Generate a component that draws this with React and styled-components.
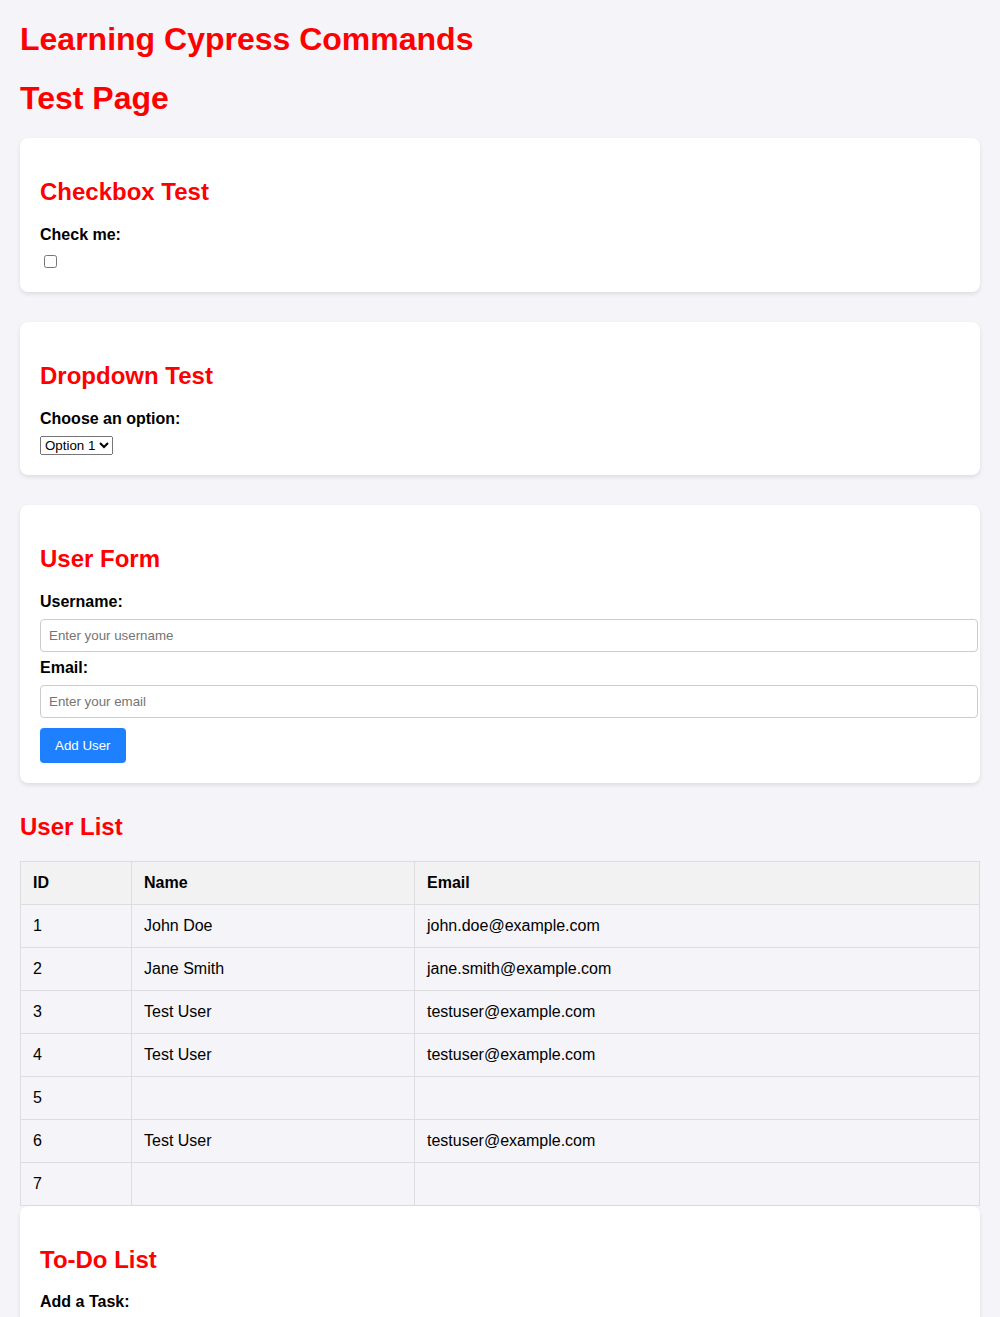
import React from "react";
import styled, { createGlobalStyle } from "styled-components";

const Global = createGlobalStyle`
  html { background: #f4f4f9; }
  body {
    margin: 0;
    padding: 0 20px 20px;
    background: #f4f4f9;
    font-family: "Liberation Sans", Arial, sans-serif;
    color: #000;
  }
`;

const Title = styled.h1`
  color: #ff0000;
  font-size: 32px;
  font-weight: bold;
  margin: 21.44px 0;
`;

const Heading = styled.h2`
  color: #ff0000;
  font-size: 24px;
  font-weight: bold;
  margin: 19.92px 0;
`;

const Card = styled.section`
  background: #fff;
  padding: 20px;
  border-radius: 8px;
  box-shadow: 0 2px 4px rgba(0, 0, 0, 0.1);
  margin-bottom: ${(p) => (p.$last ? "0" : "30px")};
`;

const Label = styled.label`
  display: block;
  font-size: 16px;
  font-weight: bold;
  margin-bottom: 8px;
`;

const Checkbox = styled.input`
  display: block;
  margin: 11px 3px 4px 4px;
  width: 13px;
  height: 13px;
`;

const Select = styled.select`
  display: block;
  font-family: "Liberation Sans", Arial, sans-serif;
  font-size: 13.33px;
  height: 19px;
`;

const TextInput = styled.input`
  display: block;
  width: 100%;
  padding: 8px;
  border: 1px solid #ccc;
  border-radius: 4px;
  font-family: "Liberation Sans", Arial, sans-serif;
  font-size: 13.33px;
  line-height: normal;
  margin: 0 0 7px;
  box-sizing: content-box;
  background: #fff;
  &::placeholder { color: #757575; }
`;

const Button = styled.button`
  display: inline-block;
  margin-top: 3px;
  padding: 10px 15px;
  background: #1e80ff;
  color: #fff;
  border: none;
  border-radius: 4px;
  font-family: "Liberation Sans", Arial, sans-serif;
  font-size: 13.33px;
  cursor: pointer;
`;

const Table = styled.table`
  width: 100%;
  border-collapse: collapse;
  margin: 0;
`;

const Col = styled.col`
  width: ${(p) => p.$w};
`;

const Th = styled.th`
  background: #f2f2f2;
  border: 1px solid #ddd;
  padding: 12px;
  text-align: left;
  font-size: 16px;
  line-height: 18px;
  font-weight: bold;
`;

const Td = styled.td`
  border: 1px solid #ddd;
  padding: 12px;
  text-align: left;
  font-size: 16px;
  line-height: 18px;
`;

const TaskList = styled.ul`
  margin: 10px 0 0;
  padding-left: 20px;
`;

const users = [
  [1, "John Doe", "john.doe@example.com"],
  [2, "Jane Smith", "jane.smith@example.com"],
  [3, "Test User", "testuser@example.com"],
  [4, "Test User", "testuser@example.com"],
  [5, "", ""],
  [6, "Test User", "testuser@example.com"],
  [7, "", ""],
];

export default function App() {
  return (
    <>
      <Global />
      <Title>Learning Cypress Commands</Title>
      <Title>Test Page</Title>

      <Card>
        <Heading>Checkbox Test</Heading>
        <Label htmlFor="cb">Check me:</Label>
        <Checkbox id="cb" type="checkbox" />
      </Card>

      <Card>
        <Heading>Dropdown Test</Heading>
        <Label htmlFor="dd">Choose an option:</Label>
        <Select id="dd" defaultValue="1">
          <option value="1">Option 1</option>
          <option value="2">Option 2</option>
          <option value="3">Option 3</option>
        </Select>
      </Card>

      <Card>
        <Heading>User Form</Heading>
        <Label htmlFor="un">Username:</Label>
        <TextInput id="un" type="text" placeholder="Enter your username" />
        <Label htmlFor="em">Email:</Label>
        <TextInput id="em" type="email" placeholder="Enter your email" />
        <Button type="button">Add User</Button>
      </Card>

      <Heading>User List</Heading>
      <Table>
        <colgroup>
          <Col $w="111px" />
          <Col $w="283px" />
          <Col $w="auto" />
        </colgroup>
        <thead>
          <tr>
            <Th>ID</Th>
            <Th>Name</Th>
            <Th>Email</Th>
          </tr>
        </thead>
        <tbody>
          {users.map(([id, name, email]) => (
            <tr key={id}>
              <Td>{id}</Td>
              <Td>{name}</Td>
              <Td>{email}</Td>
            </tr>
          ))}
        </tbody>
      </Table>

      <Card $last>
        <Heading>To-Do List</Heading>
        <Label htmlFor="task">Add a Task:</Label>
        <TextInput id="task" type="text" placeholder="Enter a new task" />
        <Button type="button">Add Task</Button>
        <TaskList />
      </Card>
    </>
  );
}
